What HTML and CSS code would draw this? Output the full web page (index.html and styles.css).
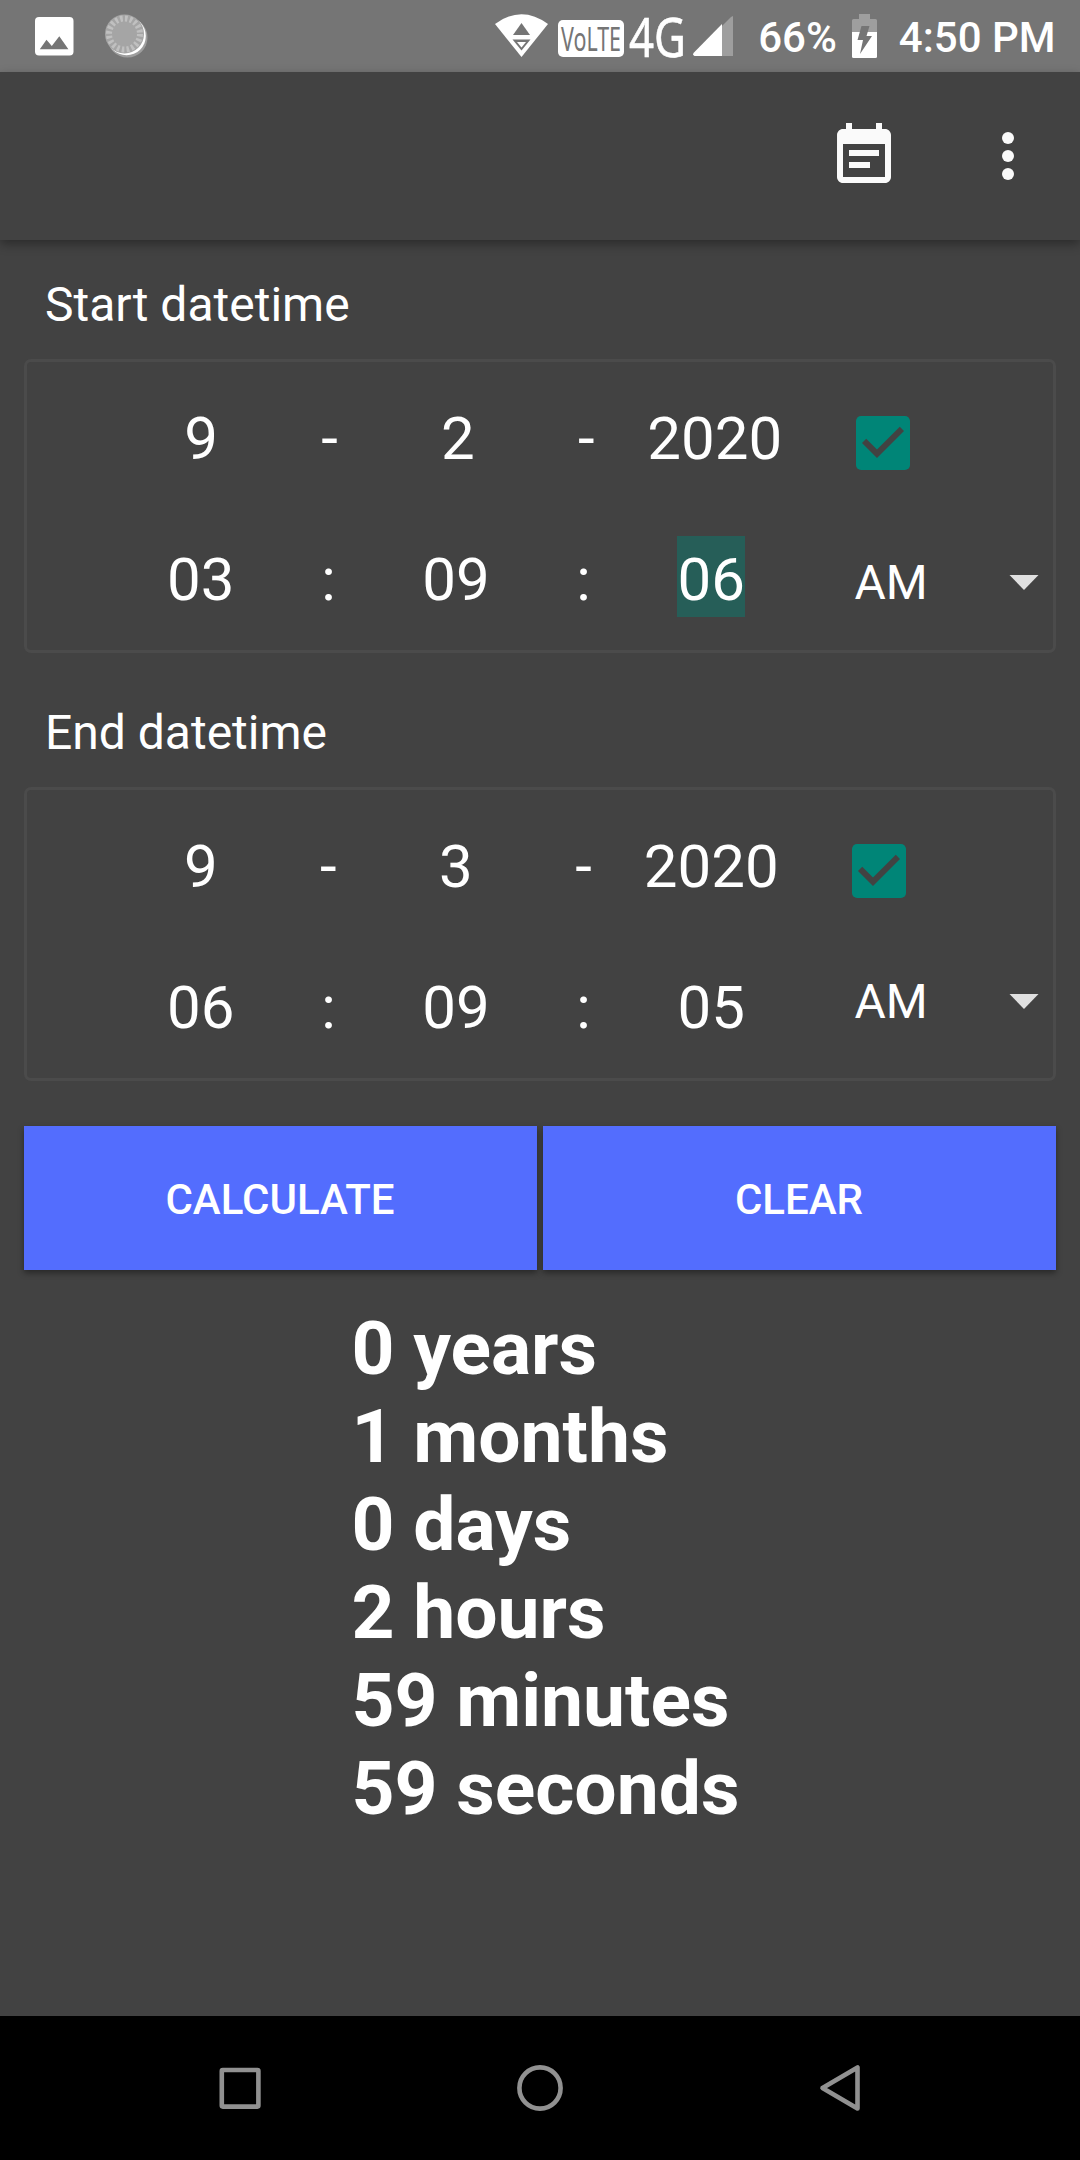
FILE: index.html
```
<!DOCTYPE html>
<html lang="en">
<head>
  <meta charset="UTF-8" />
  <meta name="viewport" content="width=device-width, initial-scale=1.0" />
  <title>Datetime Calculator</title>
  <link rel="stylesheet" href="styles.css">
</head>
<body>
  <!-- Status bar -->
  <div class="status-bar">
    <svg class="icon-image" width="39" height="39" viewBox="0 0 39 39">
      <rect width="38.5" height="38.5" rx="4" fill="#fff"/>
      <path d="M4.8 32.3L11.5 22.7L16.8 29L24.3 19.3L33.4 32.3z" fill="#757575"/>
    </svg>
    <svg class="icon-spinner" width="44" height="46" viewBox="0 0 44 46">
      <circle cx="22.5" cy="23.5" r="20" fill="#fff" opacity="0.3"/>
      <circle cx="21.5" cy="22" r="19.3" fill="#fff"/>
      <circle cx="19.5" cy="20" r="19.5" fill="#a5a5a5"/>
      <circle cx="19.5" cy="20" r="15.5" fill="none" stroke="#c0c0c0" stroke-width="6" stroke-dasharray="2.6 2.27"/>
    </svg>
    <div class="status-right">
      <svg class="icon-wifi" width="54" height="44" viewBox="0 0 54 44">
        <path d="M0 10Q26.5 -9.5 53 10L26.5 43z" fill="#fff"/>
        <path d="M26.5 9L35 21H18z" fill="#757575"/>
        <path d="M17.5 25.5H35.5L26.5 36.5z" fill="#757575"/>
        <path d="M22 28H31L26.5 33.5z" fill="#fff"/>
      </svg>
      <svg class="icon-volte" width="66" height="37" viewBox="0 0 66 37">
        <rect width="66" height="37" rx="5" fill="#fff"/>
        <text class="net-text" x="3" y="30.5" font-size="33" fill="#757575" textLength="60" lengthAdjust="spacingAndGlyphs">VoLTE</text>
      </svg>
      <svg class="icon-4g" width="57" height="44" viewBox="0 0 57 44">
        <text class="net-text" x="0" y="43" font-size="55" fill="#fff" stroke="#fff" stroke-width="0.6" textLength="57" lengthAdjust="spacingAndGlyphs">4G</text>
      </svg>
      <svg class="icon-signal" width="40" height="40" viewBox="0 0 40 40">
        <path d="M40 0V40H29V10L38 1z" fill="#9e9e9e"/>
        <path d="M29 8V40H1.5Q-0.5 39 0.5 37z" fill="#fff"/>
      </svg>
      <span class="battery-text">66%</span>
      <svg class="icon-battery" width="25" height="44" viewBox="0 0 25 44">
        <path d="M7 0H18V5H23.5Q25 5 25 6.500V18H0V6.500Q0 5 1.500 5H7z" fill="#9e9e9e"/>
        <path d="M0 18H25V42.500Q25 44 23.500 44H1.500Q0 44 0 42.500z" fill="#fff"/>
        <path d="M9.500 12H17.500L14.500 22H20L8 40L11 26H5.500z" fill="#757575"/>
      </svg>
      <span class="clock">4:50 PM</span>
    </div>
  </div>

  <!-- Toolbar -->
  <div class="toolbar">
    <svg width="72" height="72" viewBox="0 0 24 24" fill="#fafafa">
      <path d="M17 10H7v2h10v-2zm2-7h-1V1h-2v2H8V1H6v2H5c-1.11 0-1.990.9-1.990 2L3 19c0 1.100.89 2 2 2h14c1.100 0 2-.9 2-2V5c0-1.100-.9-2-2-2zm0 16H5V8h14v11zm-5-5H7v2h7v-2z"/>
    </svg>
    <svg width="72" height="72" viewBox="0 0 24 24" fill="#fafafa">
      <circle cx="12" cy="6" r="2"/>
      <circle cx="12" cy="12" r="2"/>
      <circle cx="12" cy="18" r="2"/>
    </svg>
  </div>

  <div class="content">
    <!-- Start -->
    <div class="group start">
      <div class="label">Start datetime</div>
      <div class="box">
        <div class="row date">
          <span>9</span><span>-</span><span>2</span><span>-</span><span>2020</span>
          <svg class="checkbox" width="54" height="54" viewBox="3 3 18 18">
            <rect x="3" y="3" width="18" height="18" rx="1.7" fill="#008577"/>
            <path d="M10 17l-5-5 1.410-1.410L10 14.170l7.590-7.590L19 8l-9 9z" fill="#424242"/>
          </svg>
        </div>
        <div class="row time">
          <span>03</span><span>:</span><span>09</span><span>:</span><span><mark>06</mark></span>
          <div class="spinner">AM
            <svg width="30" height="15" viewBox="0 0 30 15"><path d="M0.500 0H29.500L15 15z" fill="#e0e0e0"/></svg>
          </div>
        </div>
      </div>
    </div>

    <!-- End -->
    <div class="group end">
      <div class="label">End datetime</div>
      <div class="box">
        <div class="row date">
          <span>9</span><span>-</span><span>3</span><span>-</span><span>2020</span>
          <svg class="checkbox" width="54" height="54" viewBox="3 3 18 18">
            <rect x="3" y="3" width="18" height="18" rx="1.7" fill="#008577"/>
            <path d="M10 17l-5-5 1.410-1.410L10 14.170l7.590-7.590L19 8l-9 9z" fill="#424242"/>
          </svg>
        </div>
        <div class="row time">
          <span>06</span><span>:</span><span>09</span><span>:</span><span>05</span>
          <div class="spinner">AM
            <svg width="30" height="15" viewBox="0 0 30 15"><path d="M0.500 0H29.500L15 15z" fill="#e0e0e0"/></svg>
          </div>
        </div>
      </div>
    </div>

    <div class="buttons">
      <button class="button">CALCULATE</button>
      <button class="button">CLEAR</button>
    </div>

    <div class="result">
      <div>0 years</div>
      <div>1 months</div>
      <div>0 days</div>
      <div>2 hours</div>
      <div>59 minutes</div>
      <div>59 seconds</div>
    </div>
  </div>

  <!-- Navigation bar -->
  <div class="nav-bar">
    <svg width="48" height="48" viewBox="0 0 48 48"><rect x="5.800" y="6" width="36.600" height="36.600" rx="1" /></svg>
    <svg width="48" height="48" viewBox="0 0 48 48"><circle cx="24" cy="24" r="20.600"/></svg>
    <svg width="48" height="48" viewBox="0 0 48 48"><path d="M41.500 3.500V44.500L6.500 24z"/></svg>
  </div>
</body>
</html>
```

FILE: styles.css
```
* {
  box-sizing: border-box;
}
body {
  margin: 0;
  height: 2160px;
  display: flex;
  flex-direction: column;
  font-family: Roboto, sans-serif;
  background: #424242;
  color: #fff;
  overflow: hidden;
}
svg {
  display: block;
  flex: none;
}

/* status bar */
.status-bar {
  display: flex;
  align-items: flex-start;
  height: 72px;
  padding-left: 35px;
  background: #757575;
}
.icon-image {
  margin-top: 16.5px;
}
.icon-spinner {
  margin: 14px 0 0 31px;
}
.status-right {
  display: flex;
  align-items: flex-start;
  margin-left: auto;
  padding-right: 24.5px;
  font-size: 42px;
  font-weight: 500;
  line-height: 50px;
}
.icon-wifi {
  margin-top: 13.5px;
}
.icon-volte {
  margin: 20px 0 0 9px;
  overflow: visible;
}
.icon-4g {
  margin: 14px 0 0 5px;
  overflow: visible;
}
.icon-signal {
  margin: 16px 0 0 7.5px;
}
.net-text {
  font-family: "Noto Sans", sans-serif;
  font-weight: 400;
}
.battery-text {
  margin: 13px 0 0 25px;
}
.icon-battery {
  margin: 14px 0 0 15px;
}
.clock {
  margin: 13px 0 0 22px;
}

/* toolbar */
.toolbar {
  display: flex;
  justify-content: flex-end;
  align-items: center;
  gap: 72px;
  height: 168px;
  padding-right: 36px;
  box-shadow: 0 4px 10px rgba(0, 0, 0, 0.35);
}

.content {
  flex: 1;
  padding: 0 24px;
}
.group {
  padding-top: 52px;
}
.group.start {
  padding-top: 37px;
}
.label {
  margin: 0 0 26px 21px;
  font-size: 48px;
  line-height: 56px;
}
.box {
  height: 294px;
  padding: 6px 0 0 110px;
  border: 3px solid #4b4b4b;
  border-radius: 7px;
}
.row {
  display: flex;
  align-items: center;
  height: 141px;
  font-size: 60px;
}
.row > span {
  display: flex;
  justify-content: center;
  width: 127.6px;
}
.start .date > span {
  width: 128.4px;
}
mark {
  margin-top: -6px;
  padding: 8px 0 2px;
  background: #265e58;
  color: #fff;
}
.checkbox {
  margin: 9px 0 0 77.5px;
}
.spinner {
  display: flex;
  align-items: center;
  justify-content: space-between;
  width: 184.5px;
  margin-left: 79.5px;
  padding-top: 6px;
  font-size: 48px;
}
.end .spinner {
  padding: 0 0 12px;
}

/* buttons */
.buttons {
  display: flex;
  gap: 6px;
  margin-top: 45px;
}
.button {
  flex: 1;
  height: 144px;
  padding: 3px 1px 0 0;
  border: none;
  background: #536dfe;
  color: #fff;
  font-family: inherit;
  font-size: 42px;
  font-weight: 500;
  box-shadow: 0 3px 6px rgba(0, 0, 0, 0.4);
}

.result {
  margin: 34px 0 0 327.5px;
  font-size: 75px;
  font-weight: 700;
  line-height: 88px;
}

/* navigation bar */
.nav-bar {
  display: flex;
  justify-content: space-around;
  align-items: center;
  height: 144px;
  padding: 0 90px;
  background: #000;
}
.nav-bar svg {
  fill: none;
  stroke: #919191;
  stroke-width: 4.6;
  stroke-linejoin: round;
}
```
